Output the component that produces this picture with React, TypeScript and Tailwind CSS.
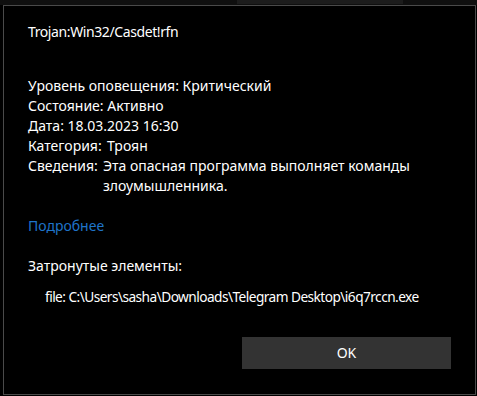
export default function App() {
  return (
    <div
      className="h-[396px] w-[477px] overflow-hidden bg-black text-white"
      style={{ fontFamily: '"Noto Sans", "Open Sans", sans-serif' }}
    >
      <div className="h-[5px] w-full bg-[#0f0f0f]">
        <div className="ml-[237px] h-[4px] w-[166px] bg-[#1c1c1c]" />
      </div>
      <div className="ml-[3px] flex h-[390px] w-[473px] flex-col border border-[#4a4a4a] bg-black pl-[24px] pr-[24px] text-[14px] leading-[20px]">
        <div className="mt-[16px] tracking-[-0.4px]">Trojan:Win32/Casdet!rfn</div>

        <div className="mt-[34px] flex flex-col">
          <div>Уровень оповещения: Критический</div>
          <div>Состояние: Активно</div>
          <div>Дата: 18.03.2023 16:30</div>
          <div className="flex">
            <span className="w-[79px] shrink-0">Категория:</span>
            <span>Троян</span>
          </div>
          <div className="flex">
            <span className="w-[75px] shrink-0">Сведения:</span>
            <span>Эта опасная программа выполняет команды злоумышленника.</span>
          </div>
        </div>

        <a href="#" className="mt-[20px] self-start text-[#1f74c9]">
          Подробнее
        </a>

        <div className="mt-[20px]">Затронутые элементы:</div>
        <div className="mt-[11px] whitespace-nowrap pl-[17px] text-[13.7px] tracking-[-0.55px]">
          file: C:\Users\sasha\Downloads\Telegram Desktop\i6q7rccn.exe
        </div>

        <div className="mt-[30px] flex justify-end">
          <button
            type="button"
            className="h-[32px] w-[209px] bg-[#333333] text-[14px] text-white"
          >
            OK
          </button>
        </div>
      </div>
    </div>
  );
}
